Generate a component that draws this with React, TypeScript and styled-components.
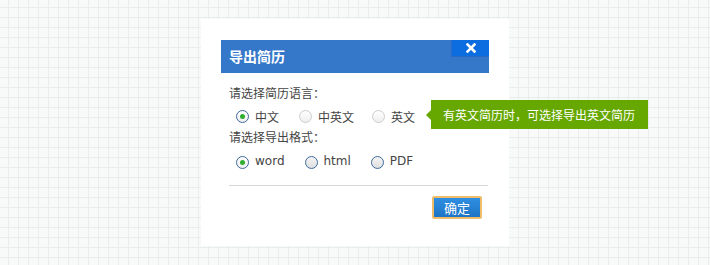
import React from "react";
import styled, { createGlobalStyle } from "styled-components";

const Global = createGlobalStyle`
  html, body {
    margin: 0;
    padding: 0;
    height: 100%;
  }
  body {
    background-color: #f7faf9;
    background-image:
      linear-gradient(to right, #e9edec 1px, transparent 1px),
      linear-gradient(to bottom, #e9edec 1px, transparent 1px);
    background-size: 10px 10px;
    background-position: 8px 7px;
    font-family: "Noto Sans CJK SC", "DejaVu Sans", sans-serif;
    font-size: 12px;
    color: #444;
  }
  #root { padding: 19px 0 0 201px; }
`;

const Dialog = styled.div`
  width: 268px;
  padding: 21px 20px 27px;
  background: #fff;
`;

const Header = styled.div`
  height: 33px;
  background: #3577c9;
  display: flex;
  justify-content: space-between;
  align-items: flex-start;
`;

const Title = styled.div`
  color: #fff;
  font-size: 14px;
  font-weight: bold;
  line-height: 33px;
  padding-left: 8px;
`;

const Close = styled.div`
  width: 37px;
  height: 16px;
  background: #0b6de0;
  border-left: 1px solid #2a68c4;
  border-bottom: 1px solid #2a68c4;
  display: flex;
  align-items: center;
  justify-content: center;
`;

const Body = styled.div`
  padding: 11px 1px 0 8px;
`;

const Label = styled.div`
  line-height: 18px;
  height: 18px;
`;

const Row = styled.div<{ $mt?: number }>`
  position: relative;
  display: flex;
  align-items: center;
  height: 24px;
  margin-top: ${(p) => p.$mt ?? 2}px;
  padding-left: 7px;
`;

const Option = styled.label<{ $mr: number }>`
  display: flex;
  align-items: center;
  gap: 6px;
  margin-right: ${(p) => p.$mr}px;
`;

const Radio = styled.span<{ $checked?: boolean; $style: "light" | "blue" }>`
  box-sizing: border-box;
  width: 13px;
  height: 13px;
  border-radius: 50%;
  border: 1px solid
    ${(p) => (p.$checked || p.$style === "blue" ? "#3d6a9c" : "#cccccc")};
  background: ${(p) =>
    p.$style === "blue" && !p.$checked
      ? "linear-gradient(#f5f5f5, #dedede)"
      : "linear-gradient(#ffffff, #efefef)"};
  display: flex;
  align-items: center;
  justify-content: center;
  &::after {
    content: "";
    display: ${(p) => (p.$checked ? "block" : "none")};
    width: 5px;
    height: 5px;
    border-radius: 50%;
    background: #2fae2f;
  }
`;

const Latin = styled.span`
  font-family: "DejaVu Sans", sans-serif;
  font-size: 12px;
  color: #444;
  position: relative;
  top: -1px;
`;

const Tip = styled.div`
  position: absolute;
  left: 202px;
  top: -4px;
  width: 205px;
  height: 29px;
  padding-left: 12px;
  background: #66a800;
  color: #fff;
  line-height: 29px;
  white-space: nowrap;
  &::before {
    content: "";
    position: absolute;
    left: -5px;
    top: 10px;
    border-top: 5px solid transparent;
    border-bottom: 5px solid transparent;
    border-right: 5px solid #66a800;
  }
`;

const Divider = styled.div`
  height: 1px;
  background: #d6d6d6;
  margin-top: 11px;
`;

const Footer = styled.div`
  display: flex;
  justify-content: flex-end;
  padding-right: 6px;
  margin-top: 10px;
`;

const Button = styled.button`
  box-sizing: border-box;
  width: 50px;
  height: 23px;
  border: 2px solid #efbc68;
  border-radius: 2px;
  background: linear-gradient(#2f8fe2, #1c74c6);
  color: #fff;
  font-family: "Noto Sans CJK SC", sans-serif;
  font-size: 13px;
  padding: 0;
  line-height: 19px;
`;

const CloseIcon = () => (
  <svg width="10" height="10" viewBox="0 0 10 10">
    <path d="M1.5 1.5 L8.5 8.5 M8.5 1.5 L1.5 8.5" stroke="#fff" strokeWidth="2.6" strokeLinecap="square" />
  </svg>
);

export default function App() {
  return (
    <>
      <Global />
      <Dialog>
        <Header>
          <Title>导出简历</Title>
          <Close>
            <CloseIcon />
          </Close>
        </Header>
        <Body>
          <Label>请选择简历语言：</Label>
          <Row>
            <Option $mr={20}>
              <Radio $checked $style="light" />
              <span>中文</span>
            </Option>
            <Option $mr={18}>
              <Radio $style="light" />
              <span>中英文</span>
            </Option>
            <Option $mr={0}>
              <Radio $style="light" />
              <span>英文</span>
            </Option>
            <Tip>有英文简历时，可选择导出英文简历</Tip>
          </Row>
          <Label>请选择导出格式：</Label>
          <Row $mt={4}>
            <Option $mr={20}>
              <Radio $checked $style="blue" />
              <Latin>word</Latin>
            </Option>
            <Option $mr={20}>
              <Radio $style="blue" />
              <Latin>html</Latin>
            </Option>
            <Option $mr={0}>
              <Radio $style="blue" />
              <Latin>PDF</Latin>
            </Option>
          </Row>
          <Divider />
          <Footer>
            <Button>确定</Button>
          </Footer>
        </Body>
      </Dialog>
    </>
  );
}
